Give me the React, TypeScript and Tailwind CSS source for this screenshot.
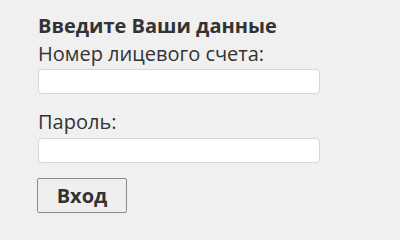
import React from 'react';

export default function App() {
  return (
    <div className="min-h-screen bg-[#f0f0f0] text-[#333]" style={{ fontFamily: '"Open Sans", sans-serif' }}>
      <form className="flex flex-col pl-[38px] pt-[14px] w-[320px]">
        <h2 className="text-[20px] leading-[24px] font-bold">Введите Ваши данные</h2>
        <label className="mt-[4px] text-[20px] leading-[24px]">Номер лицевого счета:</label>
        <input
          type="text"
          className="mt-[3px] h-[25px] w-[282px] rounded-[4px] border border-[#d6d6d6] bg-white"
        />
        <label className="mt-[16px] text-[20px] leading-[24px]">Пароль:</label>
        <input
          type="password"
          className="mt-[4px] h-[25px] w-[282px] rounded-[4px] border border-[#d6d6d6] bg-white"
        />
        <div className="mt-[15px]">
          <button
            type="button"
            className="-ml-[1px] h-[35px] w-[90px] rounded-[2px] border border-[#8a8a8a] bg-[#efefef] text-[20px] font-bold text-[#333]"
          >
            Вход
          </button>
        </div>
      </form>
    </div>
  );
}
